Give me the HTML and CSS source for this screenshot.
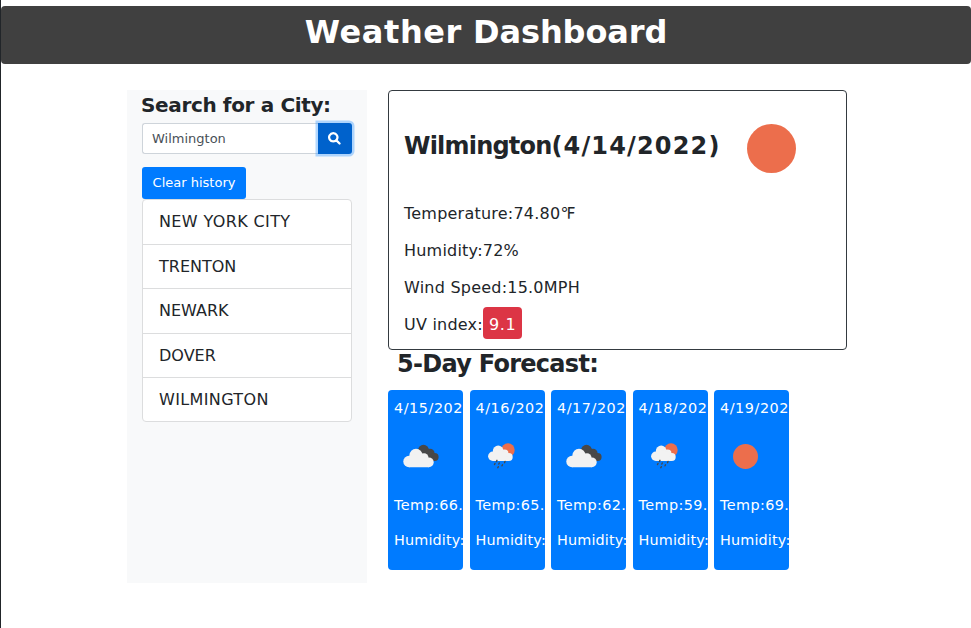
FILE: index.html
```
<!DOCTYPE html>
<html lang="en">
<head>
<meta charset="utf-8">
<title>Weather Dashboard</title>
<link rel="stylesheet" href="styles.css">
</head>
<body>
<svg width="0" height="0" class="defs" aria-hidden="true">
  <symbol id="clouds" viewBox="0 0 36 24">
    <g fill="#484848"><circle cx="20.500" cy="6.300" r="5.500"/><circle cx="27" cy="9.300" r="4.600"/><circle cx="31.600" cy="13" r="4"/><path d="M20 8h8l4 9h-8z"/></g>
    <g fill="#f2f2f2"><circle cx="6" cy="17.500" r="5.700"/><circle cx="13" cy="11.300" r="6.600"/><circle cx="21" cy="13.800" r="4.500"/><circle cx="25.800" cy="18.300" r="4.900"/><path d="M6 13l7-3 8 2 5 11.200H6z"/></g>
  </symbol>
  <symbol id="rain" viewBox="0 0 27 26">
    <circle cx="20" cy="7" r="6.700" fill="#ec6e4c"/>
    <g fill="#f2f2f2"><circle cx="4.800" cy="13.300" r="4.700"/><circle cx="10.200" cy="8" r="5.400"/><circle cx="16.700" cy="10.200" r="3.700"/><circle cx="20.800" cy="14" r="3.900"/><path d="M5 9l5-2 7 2 4 8.900H5z"/></g>
    <path stroke="#484848" stroke-width="1.400" stroke-linecap="round" d="M9 17.300l-.6 1.200M17 18.500l-.5 1.200M7 20.500l-.5 1M11.300 20l-.5 1M14.500 21.800l-.5 1M10.300 23.700l-.5 1"/>
  </symbol>
  <symbol id="sun" viewBox="0 0 50 50"><circle cx="25" cy="25" r="25" fill="#ec6e4c"/></symbol>
</svg>
<header><h1><span class="lead">Weather</span> Dashboard</h1></header>
<main>
  <aside>
    <h2>Search for a City:</h2>
    <div class="search">
      <input type="text" value="Wilmington" aria-label="City">
      <button class="go" aria-label="Search">
        <svg viewBox="0 0 512 512" width="13" height="13"><path fill="none" stroke="#fff" stroke-width="88" stroke-linecap="round" d="M330 330L455 455M208 45a163 163 0 1 0 .1 0z"/></svg>
      </button>
    </div>
    <button class="clear">Clear history</button>
    <ul>
      <li class="wide">NEW YORK CITY</li>
      <li>TRENTON</li>
      <li>NEWARK</li>
      <li>DOVER</li>
      <li class="wide">WILMINGTON</li>
    </ul>
  </aside>
  <section>
    <div class="current">
      <div class="title"><h2><span class="city">Wilmington</span><span class="day">(4/14/2022)</span></h2><svg width="49" height="49"><use href="#sun"/></svg></div>
      <p>Temperature:74.80℉</p>
      <p>Humidity:72%</p>
      <p>Wind Speed:15.0MPH</p>
      <p>UV index:<span class="uv">9.1</span></p>
    </div>
    <h2 class="fiveday">5-Day Forecast:</h2>
    <div class="cards">
      <article><p class="date">4/15/202</p><div class="icon"><svg class="clouds"><use href="#clouds"/></svg></div><p class="temp">Temp:66.</p><p>Humidity:</p></article>
      <article><p class="date">4/16/202</p><div class="icon"><svg class="rain"><use href="#rain"/></svg></div><p class="temp">Temp:65.</p><p>Humidity:</p></article>
      <article><p class="date">4/17/202</p><div class="icon"><svg class="clouds"><use href="#clouds"/></svg></div><p class="temp">Temp:62.</p><p>Humidity:</p></article>
      <article><p class="date">4/18/202</p><div class="icon"><svg class="rain"><use href="#rain"/></svg></div><p class="temp">Temp:59.</p><p>Humidity:</p></article>
      <article><p class="date">4/19/202</p><div class="icon"><svg class="sun"><use href="#sun"/></svg></div><p class="temp">Temp:69.</p><p>Humidity:</p></article>
    </div>
  </section>
</main>
</body>
</html>
```
FILE: styles.css
```
* { box-sizing: border-box; }
html { background: #fff; }
body {
  margin: 0;
  min-height: 628px;
  padding-top: 6px;
  border-left: 1px solid #212529;
  font: 16px/24px Verdana, "DejaVu Sans", sans-serif;
  color: #212529;
}
h1, h2, p, ul { margin: 0; padding: 0; }
p, h1, h2 { white-space: nowrap; }
svg { display: block; flex: none; }
.defs { position: absolute; }
header { height: 58px; background: #404040; border-radius: 4px; text-align: center; }
h1 { font-size: 32px; line-height: 53px; color: #fff; letter-spacing: -.1px; }
.lead { letter-spacing: .6px; }
main { display: flex; align-items: flex-start; gap: 21px; padding: 26px 0 0 126px; }
aside { width: 240px; height: 493px; padding: 0 15px; background: #f8f9fa; }
aside h2 { margin-left: -1px; font-size: 20px; line-height: 30px; height: 33px; letter-spacing: -.36px; }
.search { display: flex; height: 31px; margin-bottom: 13px; }
input {
  width: 176px;
  padding: 0 9px;
  border: 1px solid #ced4da;
  border-right: 0;
  border-radius: 3px 0 0 3px;
  background: #fff;
  color: #495057;
  font: 13px Verdana, "DejaVu Sans", sans-serif;
}
button { border: 0; padding: 0; color: #fff; }
.go {
  display: flex;
  align-items: center;
  justify-content: center;
  width: 34px;
  padding-right: 1px;
  background: #0062cc;
  border-radius: 0 3px 3px 0;
  box-shadow: 0 0 0 2.500px rgba(38, 143, 255, .35);
}
.clear {
  display: block;
  width: 104px;
  height: 32px;
  padding-bottom: 2px;
  border-radius: 3px;
  background: #007bff;
  font: 13px Verdana, "DejaVu Sans", sans-serif;
}
ul { list-style: none; height: 223px; border: 1px solid #dcddde; border-radius: 4px; background: #fff; }
li { height: 44.5px; padding: 10px 16px; line-height: 24px; border-bottom: 1px solid #dcddde; }
li:last-child { border-bottom: 0; }
.wide { letter-spacing: .37px; }
.current { width: 459px; height: 260px; padding: 33px 15px 0; border: 1px solid #343a40; border-radius: 4px; }
.title { display: flex; gap: 27px; height: 77px; }
.title h2 { width: 316px; font-size: 24px; line-height: 45px; }
.city { letter-spacing: -.8px; }
.day { letter-spacing: 1.15px; }
.current p { height: 37px; line-height: 26px; letter-spacing: .22px; }
.uv { height: 32px; margin-top: -4px; padding: 0 6px; line-height: 35px; background: #dc3545; color: #fff; border-radius: 4px; letter-spacing: .7px; }
.current p:last-child { display: flex; align-items: center; height: 26px; }
.fiveday { font-size: 24px; line-height: 29px; height: 40px; padding-left: 9px; letter-spacing: -.72px; }
.cards { display: flex; gap: 6.5px; }
article { width: 75px; height: 180px; padding: 5px 0 0 6px; overflow: hidden; border-radius: 4px; background: #007bff; color: #fff; font-size: 14.4px; letter-spacing: .15px; }
article p { height: 35px; line-height: 26px; }
.date { letter-spacing: .55px; }
.temp { letter-spacing: .4px; }
.icon { height: 62px; padding-top: 14px; }
.clouds { width: 36px; height: 24px; margin: 0 0 0 9px; }
.rain { width: 27px; height: 26px; margin: -1px 0 0 12px; }
.sun { width: 25px; height: 25px; margin: 0 0 0 13px; }
```
